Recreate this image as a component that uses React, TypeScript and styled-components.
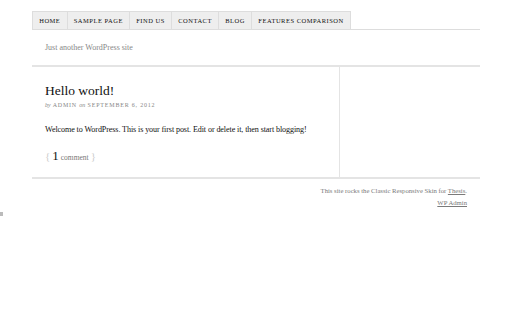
import React from 'react'
import styled, { createGlobalStyle } from 'styled-components'

const Global = createGlobalStyle`
  html, body {
    margin: 0;
    padding: 0;
    background: #fff;
    font-family: 'Liberation Serif', 'Times New Roman', serif;
    color: #111;
  }
`

const Page = styled.div`
  width: 448px;
  margin: 0 auto;
  padding-top: 11px;
`

const Nav = styled.ul`
  display: flex;
  list-style: none;
  margin: 0;
  padding: 0;
  border-bottom: 1px solid #ddd;
`

const NavItem = styled.li`
  background: #eee;
  border: 1px solid #ddd;
  border-bottom: none;
  margin-left: -1px;
  &:first-child {
    margin-left: 0;
  }
  padding: 0 6.2px;
  height: 17px;
  display: flex;
  align-items: center;
  font-size: 6.5px;
  letter-spacing: 0.5px;
  color: #111;
  text-transform: uppercase;
`

const Tagline = styled.div`
  padding: 13px 13px 13px;
  font-size: 8px;
  color: #888;
  border-bottom: 2px solid #e4e4e4;
`

const Columns = styled.div`
  display: grid;
  grid-template-columns: 308px 1fr;
  border-bottom: 2px solid #e4e4e4;
`

const Content = styled.div`
  border-right: 1px solid #e4e4e4;
  padding: 15px 13px 13px;
`

const Title = styled.h2`
  margin: 0;
  font-weight: normal;
  font-size: 13.5px;
  line-height: 18px;
  color: #111;
`

const Byline = styled.div`
  margin-top: 2px;
  font-size: 6px;
  letter-spacing: 0.8px;
  color: #888;
  text-transform: uppercase;
  em {
    text-transform: none;
    letter-spacing: 0;
  }
`

const Body = styled.p`
  margin: 17px 0 0;
  font-size: 8.1px;
  letter-spacing: -0.1px;
  color: #111;
`

const Comments = styled.div`
  margin-top: 14px;
  display: flex;
  align-items: baseline;
  gap: 2px;
  color: #ccc;
  font-size: 11px;
`

const Count = styled.span`
  color: #111;
  font-size: 13px;
`

const CommentLabel = styled.span`
  color: #777;
  font-size: 7.5px;
`

const Sidebar = styled.div``

const Footer = styled.div`
  padding: 6px 13px 0;
  text-align: right;
  font-size: 6.7px;
  line-height: 12px;
  color: #7a7a7a;
  a {
    color: #7a7a7a;
    text-decoration: underline;
  }
`

const Marker = styled.div`
  width: 3px;
  height: 4px;
  margin-top: 3px;
  background: #bbb;
`

const items = ['Home', 'Sample Page', 'Find Us', 'Contact', 'Blog', 'Features Comparison']

export default function App() {
  return (
    <>
      <Global />
      <Page>
        <Nav>
          {items.map((t) => (
            <NavItem key={t}>{t}</NavItem>
          ))}
        </Nav>
        <Tagline>Just another WordPress site</Tagline>
        <Columns>
          <Content>
            <Title>Hello world!</Title>
            <Byline>
              <em>by</em> Admin <em>on</em> September 6, 2012
            </Byline>
            <Body>Welcome to WordPress. This is your first post. Edit or delete it, then start blogging!</Body>
            <Comments>
              <span>{'{'}</span>
              <Count>1</Count>
              <CommentLabel>comment</CommentLabel>
              <span>{'}'}</span>
            </Comments>
          </Content>
          <Sidebar />
        </Columns>
        <Footer>
          <div>
            This site rocks the Classic Responsive Skin for <a href="#">Thesis</a>.
          </div>
          <div>
            <a href="#">WP Admin</a>
          </div>
        </Footer>
      </Page>
      <Marker />
    </>
  )
}
